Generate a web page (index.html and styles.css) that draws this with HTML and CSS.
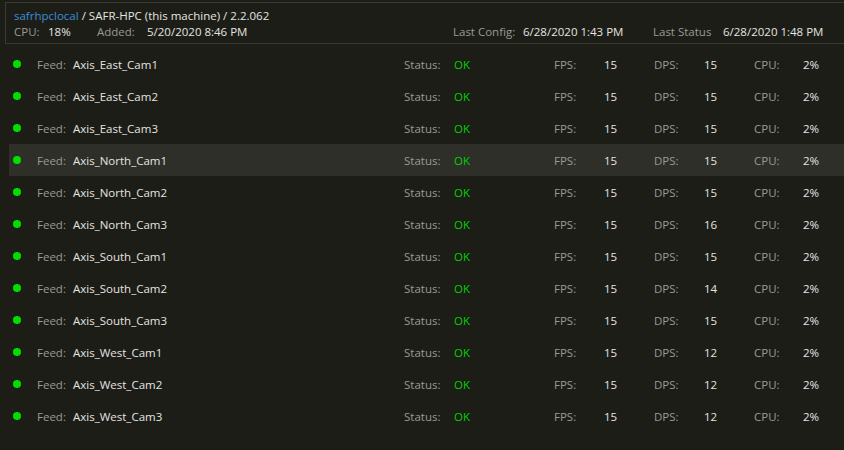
FILE: index.html
```html
<!DOCTYPE html>
<html>
<head>
<meta charset="utf-8">
<link rel="stylesheet" href="styles.css">
</head>
<body>
<div class="header">
  <div class="title"><span class="link">safrhpclocal</span> / SAFR-HPC (this machine) / 2.2.062</div>
  <div class="meta">
    <span class="lbl">CPU:</span><span class="val">18%</span>
    <span class="lbl">Added:</span><span class="val">5/20/2020 8:46 PM</span>
    <span></span>
    <span class="lbl">Last Config:</span><span class="val">6/28/2020 1:43 PM</span>
    <span class="lbl">Last Status</span><span class="val">6/28/2020 1:48 PM</span>
  </div>
</div>
<div class="rows" id="rows"></div>
<script src="app.js"></script>
</body>
</html>
```
FILE: app.js
```js
const data = [
  ["Axis_East_Cam1",15,15],["Axis_East_Cam2",15,15],["Axis_East_Cam3",15,15],
  ["Axis_North_Cam1",15,15],["Axis_North_Cam2",15,15],["Axis_North_Cam3",15,16],
  ["Axis_South_Cam1",15,15],["Axis_South_Cam2",15,14],["Axis_South_Cam3",15,15],
  ["Axis_West_Cam1",15,12],["Axis_West_Cam2",15,12],["Axis_West_Cam3",15,12]
];
const rows = document.getElementById("rows");
data.forEach((d, i) => {
  const r = document.createElement("div");
  r.className = "row" + (i === 3 ? " selected" : "");
  r.innerHTML =
    '<span class="dot"></span>' +
    '<span class="lbl">Feed:</span><span class="val">' + d[0] + '</span>' +
    '<span class="lbl">Status:</span><span class="ok">OK</span>' +
    '<span class="lbl">FPS:</span><span class="val">' + d[1] + '</span>' +
    '<span class="lbl">DPS:</span><span class="val">' + d[2] + '</span>' +
    '<span class="lbl">CPU:</span><span class="val">2%</span>';
  rows.appendChild(r);
});
```
FILE: styles.css
```css
html, body {
  margin: 0;
  padding: 0;
  background: #1d1d17;
  width: 844px;
  height: 450px;
  overflow: hidden;
  font-family: "Open Sans", "Noto Sans", sans-serif;
  font-size: 11.5px;
  color: #e4e4e0;
}
.header {
  margin: 2px 0 0 5px;
  height: 40px;
  border: 1px solid #3a3a33;
  border-right: none;
  padding-left: 8px;
  box-sizing: content-box;
}
.title {
  height: 16px;
  line-height: 16px;
  margin-top: 5px;
}
.link { color: #3b8ed8; }
.meta {
  display: grid;
  grid-template-columns: 34px 49px 50px 150px 156px 70px 130px 70px auto;
  height: 16px;
  line-height: 16px;
}
.lbl { color: #9a9a94; white-space: nowrap; }
.val { color: #e4e4e0; white-space: nowrap; }
.ok { color: #00d000; }
.rows {
  margin: 4px 0 0 9px;
}
.row {
  display: grid;
  grid-template-columns: 24px 36px 331px 50px 100px 50px 50px 50px 50px 49px auto;
  align-items: center;
  height: 32px;
  padding-left: 4px;
}
.row.selected { background: #2e2f28; }
.dot {
  width: 8px;
  height: 8px;
  border-radius: 50%;
  background: #00e000;
}
```
